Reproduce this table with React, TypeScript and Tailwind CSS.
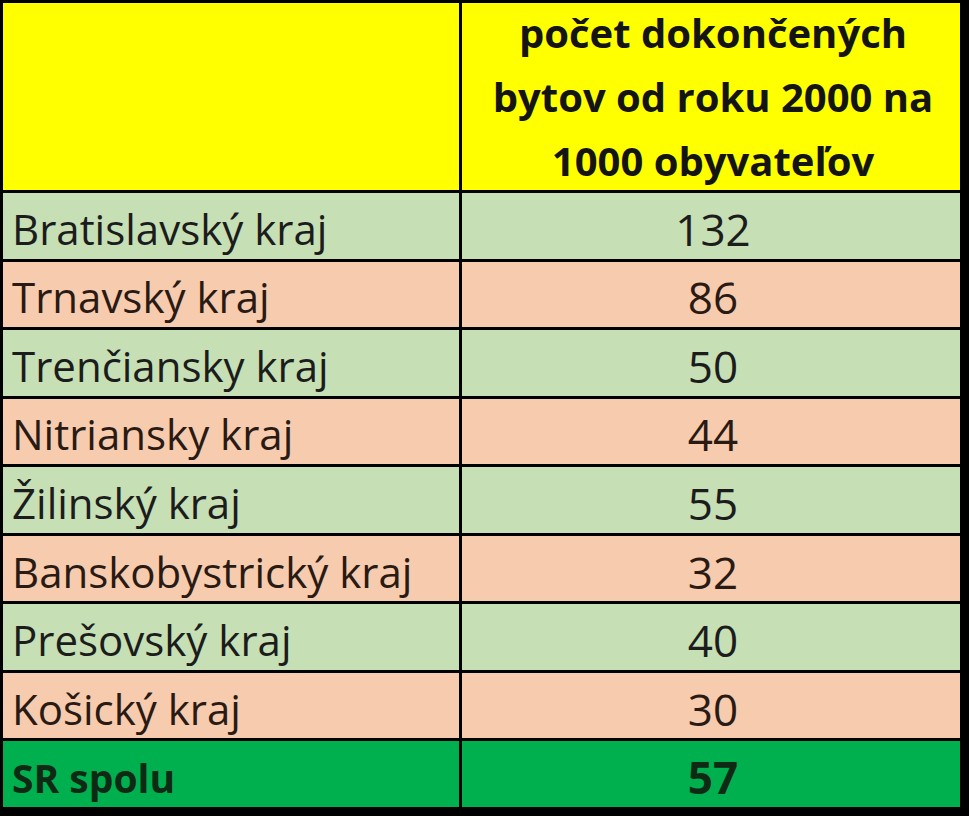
import React from 'react';

type Row = { name: string; value: string; tone: 'green' | 'peach' | 'total' };

const rows: Row[] = [
  { name: 'Bratislavský kraj', value: '132', tone: 'green' },
  { name: 'Trnavský kraj', value: '86', tone: 'peach' },
  { name: 'Trenčiansky kraj', value: '50', tone: 'green' },
  { name: 'Nitriansky kraj', value: '44', tone: 'peach' },
  { name: 'Žilinský kraj', value: '55', tone: 'green' },
  { name: 'Banskobystrický kraj', value: '32', tone: 'peach' },
  { name: 'Prešovský kraj', value: '40', tone: 'green' },
  { name: 'Košický kraj', value: '30', tone: 'peach' },
  { name: 'SR spolu', value: '57', tone: 'total' },
];

const toneClass = {
  green: 'bg-[#c6dfb4] text-[#1c1c1c] text-[42px]',
  peach: 'bg-[#f7cbad] text-[#2a1a14] text-[42px]',
  total: 'bg-[#00b04f] text-[#0f2a14] font-bold text-[39px]',
};

export default function App() {
  return (
    <div
      className="h-[816px] w-[969px] overflow-hidden bg-black pb-[9px] pl-[3px] pr-[9px] pt-[3px]"
      style={{ fontFamily: '"Open Sans", "Noto Sans", sans-serif' }}
    >
      <div className="grid h-full grid-cols-[456px_1fr] grid-rows-[187px_repeat(9,minmax(0,1fr))] gap-[3px]">
        <div className="bg-[#ffff00]" />
        <div className="flex flex-col items-center justify-center bg-[#ffff00] pl-[4px] text-center text-[40px] font-bold leading-[64px] text-[#141414]">
          <span>počet dokončených</span>
          <span>bytov od roku 2000 na</span>
          <span>1000 obyvateľov</span>
        </div>
        {rows.map((r) => (
          <React.Fragment key={r.name}>
            <div className={`flex items-center overflow-hidden pl-[9px] pt-[6px] leading-none ${toneClass[r.tone]}`}>
              {r.name}
            </div>
            <div
              className={`flex items-center justify-center overflow-hidden pl-[4px] pt-[6px] text-[44px] leading-none ${toneClass[r.tone]}`}
            >
              {r.value}
            </div>
          </React.Fragment>
        ))}
      </div>
    </div>
  );
}
